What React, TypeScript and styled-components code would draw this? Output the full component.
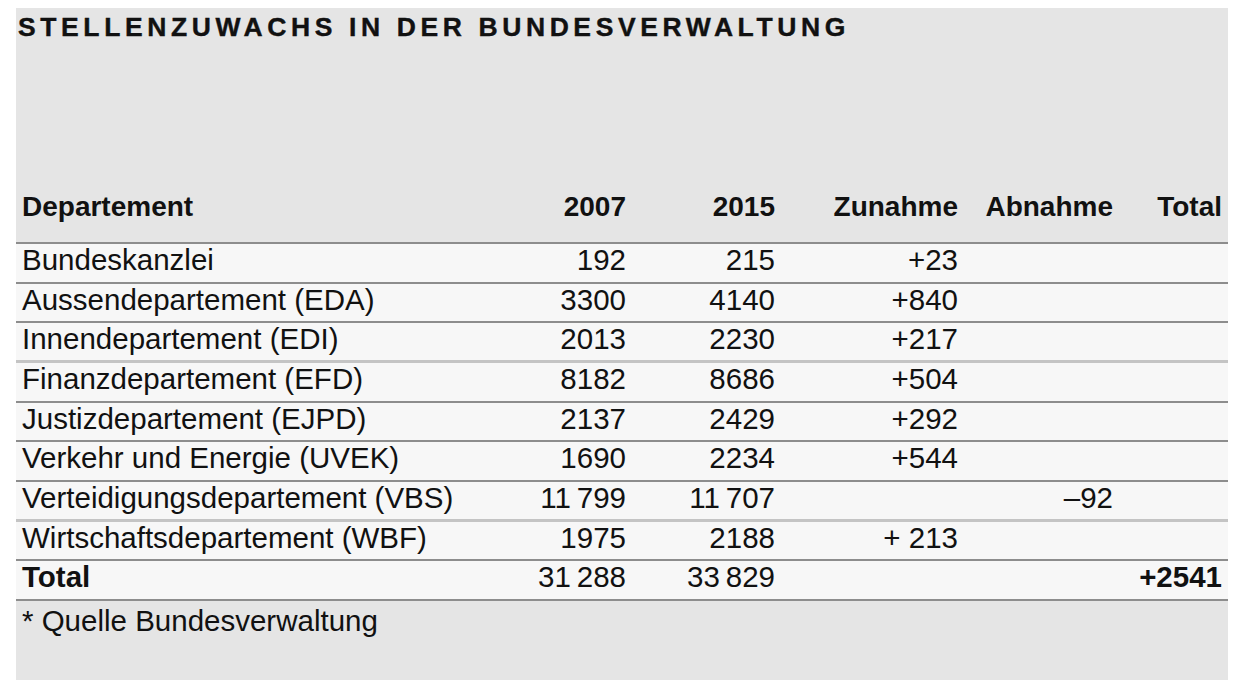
import React from 'react';
import styled, { createGlobalStyle } from 'styled-components';

const GlobalStyle = createGlobalStyle`
  html, body {
    margin: 0;
    padding: 0;
    background: #ffffff;
  }
  body {
    font-family: "Liberation Sans", Arial, sans-serif;
    color: #111111;
  }
`;

const COLUMNS = '467px 147px 152px 181px 156px 109px';
const PAD_RIGHT = [0, 4, 7, 5, 6, 6];

const StyledPanel = styled.div`
  margin: 8px 12px 0 16px;
  width: 1212px;
  height: 672px;
  background-color: #e5e5e5;
  display: flex;
  flex-direction: column;
`;

const StyledTitle = styled.h1`
  margin: 0;
  padding: 6px 0 0 2px;
  font-size: 26.5px;
  line-height: 26px;
  font-weight: 700;
  letter-spacing: 4.6px;
  text-transform: uppercase;
  color: #111111;
  -webkit-text-stroke: 0.4px #111111;
`;

const StyledHeader = styled.div`
  display: grid;
  grid-template-columns: ${COLUMNS};
  align-items: end;
  height: 204px;
  padding-bottom: 21px;
  box-sizing: border-box;
  border-bottom: 2px solid #8d8d8d;
`;

const StyledRow = styled.div<{ light?: boolean }>`
  display: grid;
  grid-template-columns: ${COLUMNS};
  align-items: start;
  height: 39.67px;
  box-sizing: border-box;
  background-color: #f7f7f7;
  border-bottom: ${props => (props.light ? '3px solid #c4c4c4' : '2px solid #8d8d8d')};
`;

const StyledCell = styled.div<{ col: number; bold?: boolean; head?: boolean }>`
  font-size: ${props => (props.head ? '28px' : '29.5px')};
  font-weight: ${props => (props.bold ? 700 : 400)};
  line-height: 1;
  padding-top: ${props => (props.head ? '0' : '1px')};
  padding-left: ${props => (props.col === 0 ? '6px' : '0')};
  padding-right: ${props => PAD_RIGHT[props.col]}px;
  text-align: ${props => (props.col === 0 ? 'left' : 'right')};
  white-space: nowrap;
`;

const StyledNote = styled.div`
  margin-top: 5px;
  padding-left: 6px;
  font-size: 29.5px;
  line-height: 1;
`;

const headers = ['Departement', '2007', '2015', 'Zunahme', 'Abnahme', 'Total'];

const rows: { cells: string[]; light?: boolean }[] = [
  { cells: ['Bundeskanzlei', '192', '215', '+23', '', ''] },
  { cells: ['Aussendepartement (EDA)', '3300', '4140', '+840', '', ''] },
  { cells: ['Innendepartement (EDI)', '2013', '2230', '+217', '', ''], light: true },
  { cells: ['Finanzdepartement (EFD)', '8182', '8686', '+504', '', ''] },
  { cells: ['Justizdepartement (EJPD)', '2137', '2429', '+292', '', ''] },
  { cells: ['Verkehr und Energie (UVEK)', '1690', '2234', '+544', '', ''] },
  { cells: ['Verteidigungsdepartement (VBS)', '11\u2009799', '11\u2009707', '', '\u201392', ''], light: true },
  { cells: ['Wirtschaftsdepartement (WBF)', '1975', '2188', '+ 213', '', ''] },
];

const totalRow = ['Total', '31\u2009288', '33\u2009829', '', '', '+2541'];

export default function App() {
  return (
    <>
      <GlobalStyle />
      <StyledPanel>
        <StyledTitle>Stellenzuwachs in der Bundesverwaltung</StyledTitle>
        <StyledHeader>
          {headers.map((h, i) => (
            <StyledCell key={i} col={i} bold head>{h}</StyledCell>
          ))}
        </StyledHeader>
        {rows.map((row, r) => (
          <StyledRow key={r} light={row.light}>
            {row.cells.map((c, i) => (
              <StyledCell key={i} col={i}>{c}</StyledCell>
            ))}
          </StyledRow>
        ))}
        <StyledRow>
          {totalRow.map((c, i) => (
            <StyledCell key={i} col={i} bold={i === 0 || i === 5}>{c}</StyledCell>
          ))}
        </StyledRow>
        <StyledNote>* Quelle Bundesverwaltung</StyledNote>
      </StyledPanel>
    </>
  );
}
